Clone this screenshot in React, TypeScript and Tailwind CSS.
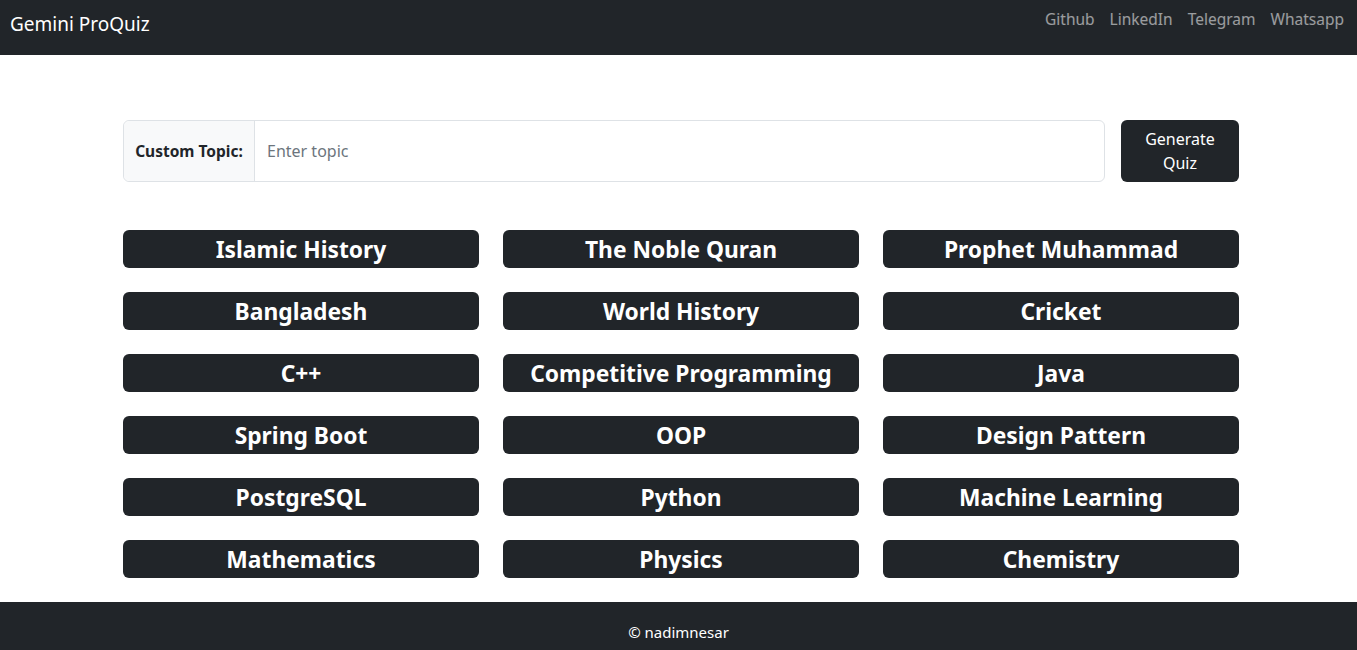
import React from "react"

const TOPICS = [
  "Islamic History",
  "The Noble Quran",
  "Prophet Muhammad",
  "Bangladesh",
  "World History",
  "Cricket",
  "C++",
  "Competitive Programming",
  "Java",
  "Spring Boot",
  "OOP",
  "Design Pattern",
  "PostgreSQL",
  "Python",
  "Machine Learning",
  "Mathematics",
  "Physics",
  "Chemistry",
]

const NAV_LINKS = ["Github", "LinkedIn", "Telegram", "Whatsapp"]

export default function App() {
  return (
    <div className="flex min-h-[650px] flex-col bg-white font-['Noto_Sans',sans-serif] text-[#212529]">
      {/* Navbar */}
      <nav className="flex h-[55px] items-center justify-between bg-[#212529] pl-[10px] pr-[13px]">
        <span className="pb-[6px] text-[19px] text-white">Gemini ProQuiz</span>
        <div className="flex gap-[15px] self-start pt-[8px]">
          {NAV_LINKS.map((link) => (
            <a key={link} href="#" className="text-[15.5px] text-white/55">
              {link}
            </a>
          ))}
        </div>
      </nav>

      <main className="ml-[123px] w-[1116px] flex-1 pt-[65px]">
        {/* Custom topic */}
        <div className="flex gap-[16px]">
          <div className="flex h-[62px] flex-1 rounded-md border border-[#dee2e6]">
            <label className="flex w-[131px] items-center justify-center rounded-l-md border-r border-[#dee2e6] bg-[#f8f9fa] pt-[2px] text-[15.5px] font-bold">
              Custom Topic:
            </label>
            <input
              type="text"
              placeholder="Enter topic"
              className="flex-1 rounded-r-md px-[12px] text-[16px] outline-none placeholder:text-[#6c757d]"
            />
          </div>
          <button className="h-[62px] w-[118px] rounded-md bg-[#212529] px-[24px] text-[16px] leading-[24px] text-white">
            Generate Quiz
          </button>
        </div>

        {/* Topics */}
        <div className="mt-[48px] grid grid-cols-3 gap-x-[24px] gap-y-[24px]">
          {TOPICS.map((topic) => (
            <button
              key={topic}
              className="flex h-[38px] items-center justify-center rounded-md bg-[#212529] pt-[2px] text-[22.8px] font-bold text-white"
            >
              {topic}
            </button>
          ))}
        </div>
      </main>

      {/* Footer */}
      <footer className="mt-[24px] flex h-[48px] items-center justify-center bg-[#212529] pt-[12px] text-[15px] text-white">
        © nadimnesar
      </footer>
    </div>
  )
}
